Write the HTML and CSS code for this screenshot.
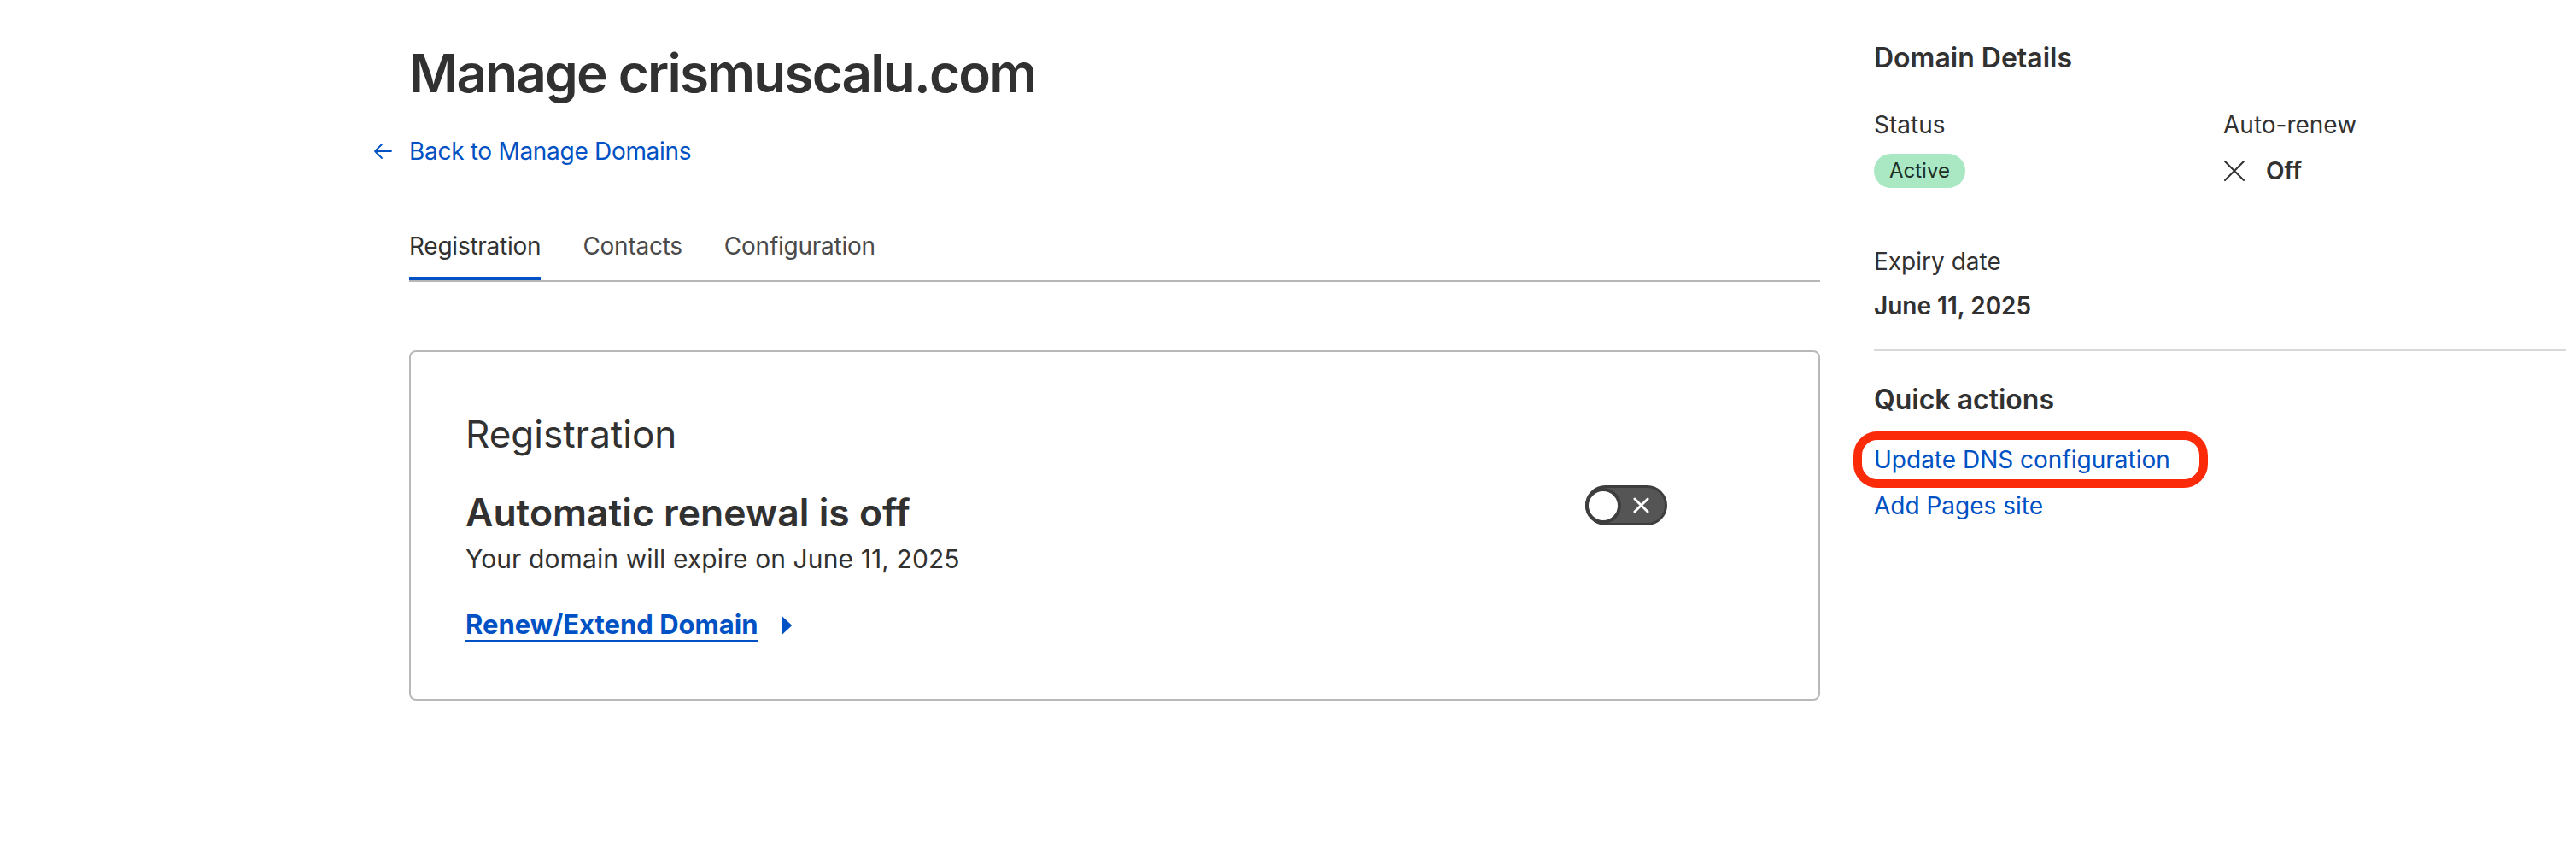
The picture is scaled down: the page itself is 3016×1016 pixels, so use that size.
FILE: index.html
```html
<!DOCTYPE html>
<html lang="en">
<head>
<meta charset="utf-8">
<title>Manage crismuscalu.com</title>
<link rel="stylesheet" href="styles.css">
</head>
<body>
<div class="page">
  <main class="main">
    <h1 class="title">Manage crismuscalu.com</h1>
    <a class="back" href="#">
      <svg class="back-arrow" viewBox="0 0 22 20" width="22" height="20" aria-hidden="true">
        <path d="M21 10H2M10 2L2 10l8 8" fill="none" stroke="#0051c3" stroke-width="1.8" stroke-linecap="round" stroke-linejoin="round"/>
      </svg>
      <span>Back to Manage Domains</span>
    </a>
    <nav class="tabs">
      <a class="tab active" href="#">Registration</a>
      <a class="tab" href="#">Contacts</a>
      <a class="tab" href="#">Configuration</a>
    </nav>
    <section class="card">
      <h2 class="card-title">Registration</h2>
      <div class="renew-row">
        <div class="renew-text">
          <h3 class="renew-head">Automatic renewal is off</h3>
          <p class="renew-sub">Your domain will expire on June 11, 2025</p>
        </div>
        <div class="toggle">
          <span class="knob"></span>
          <svg class="toggle-x" viewBox="0 0 20 20" width="20" height="20" aria-hidden="true">
            <path d="M2 2L18 18M18 2L2 18" stroke="#fff" stroke-width="3" stroke-linecap="round"/>
          </svg>
        </div>
      </div>
      <a class="renew-link" href="#"><span class="renew-label">Renew/Extend Domain</span><svg class="caret" viewBox="0 0 14 26" width="14" height="26" aria-hidden="true"><path d="M2 2.5L12.5 12.2Q13.4 13 12.5 13.8L2 23.5Q1 24.3 1 23V3Q1 1.7 2 2.5Z" fill="#0051c3"/></svg></a>
    </section>
  </main>
  <aside class="side">
    <h2 class="side-title">Domain Details</h2>
    <div class="detail-grid">
      <div class="detail">
        <div class="label">Status</div>
        <div class="value-row"><span class="badge">Active</span></div>
      </div>
      <div class="detail">
        <div class="label">Auto-renew</div>
        <div class="value-row">
          <svg class="off-x" viewBox="0 0 26 24" width="26" height="24" aria-hidden="true">
            <path d="M2 1L24 23M24 1L2 23" stroke="#313131" stroke-width="2" stroke-linecap="round"/>
          </svg>
          <span class="value">Off</span>
        </div>
      </div>
    </div>
    <div class="detail expiry">
      <div class="label">Expiry date</div>
      <div class="value date">June 11, 2025</div>
    </div>
    <hr class="divider">
    <h2 class="side-title qa">Quick actions</h2>
    <ul class="actions">
      <li class="action highlighted"><a href="#">Update DNS configuration</a></li>
      <li class="action"><a href="#">Add Pages site</a></li>
    </ul>
  </aside>
</div>
</body>
</html>
```
FILE: styles.css
```css
*, *::before, *::after { box-sizing: border-box; }
html, body { margin: 0; padding: 0; background: #fff; }
body {
  font-family: "Inter", "Noto Sans", "Liberation Sans", sans-serif;
  color: #313131;
}
a { text-decoration: none; color: #0051c3; }

.page {
  display: flex;
  align-items: flex-start;
  padding-left: 479px;
}

.main {
  width: 1652px;
  padding-top: 48px;
}
.title {
  margin: 0;
  font-size: 62px;
  line-height: 76px;
  font-weight: 600;
  color: #313131;
  letter-spacing: -1.8px;
}
.back {
  display: flex;
  align-items: center;
  margin-top: 33px;
  margin-left: -42px;
  font-size: 28px;
  line-height: 40px;
  letter-spacing: -0.3px;
}
.back-arrow { margin-right: 20px; }

.tabs {
  display: flex;
  gap: 49px;
  margin-top: 71px;
  border-bottom: 2px solid #b6b6b6;
}
.tab {
  font-size: 28px;
  line-height: 40px;
  letter-spacing: -0.25px;
  color: #4a4a4a;
  padding-bottom: 16px;
  border-bottom: 4px solid transparent;
}
.tab.active {
  color: #313131;
  border-bottom-color: #0051c3;
}

.card {
  margin-top: 80px;
  border: 2px solid #b9b9b9;
  border-radius: 8px;
  padding: 70px 64px 66px;
}
.card-title {
  margin: 0;
  font-size: 44px;
  line-height: 52px;
  font-weight: 400;
}
.renew-row {
  display: flex;
  align-items: flex-start;
  margin-top: 40px;
}
.renew-text { flex: 1; }
.renew-head {
  margin: 0;
  font-size: 44.5px;
  line-height: 52px;
  font-weight: 600;
}
.renew-sub {
  margin: 8px 0 0;
  font-size: 30px;
  line-height: 40px;
  letter-spacing: 0.1px;
}
.toggle {
  position: relative;
  width: 96px;
  height: 47px;
  margin-top: -6px;
  margin-right: 113px;
  border-radius: 24px;
  background: #555;
  border: 3px solid #3e3e3e;
  display: flex;
  align-items: center;
}
.knob {
  width: 42px;
  height: 42px;
  border-radius: 50%;
  background: #fff;
  border: 4px solid #3e3e3e;
  margin-left: -3px;
}
.toggle-x { margin-left: 14px; width: 19px; height: 19px; }

.renew-link {
  display: inline-flex;
  align-items: baseline;
  margin-top: 38px;
  font-size: 31px;
  line-height: 40px;
  font-weight: 700;
}
.renew-label {
  border-bottom: 3px solid #0051c3;
  line-height: 37px;
}
.caret { margin-left: 26px; align-self: center; }

.side {
  margin-left: 63px;
  width: 810px;
  padding-top: 48px;
}
.side-title {
  margin: 0;
  font-size: 32px;
  line-height: 40px;
  font-weight: 600;
}
.detail-grid {
  display: grid;
  grid-template-columns: 409px 1fr;
  margin-top: 38px;
}
.label {
  font-size: 28px;
  line-height: 40px;
}
.value-row {
  display: flex;
  align-items: center;
  height: 40px;
  margin-top: 14px;
}
.badge {
  display: inline-block;
  height: 40px;
  line-height: 40px;
  padding: 0 18px;
  border-radius: 20px;
  background: #a9e8c3;
  font-size: 24px;
  color: #1f2e25;
}
.off-x { margin-right: 24px; }
.value {
  font-size: 28px;
  line-height: 40px;
  font-weight: 600;
}
.expiry { margin-top: 66px; }
.date { margin-top: 12px; }
.divider {
  margin: 31px 0 0;
  border: 0;
  border-top: 2px solid #d9d9d9;
  height: 0;
}
.qa { margin-top: 37px; }
.actions {
  list-style: none;
  margin: 30px 0 0;
  padding: 0;
}
.action {
  font-size: 28px;
  line-height: 40px;
}
.action + .action { margin-top: 14px; }
.highlighted { position: relative; }
.highlighted::before {
  content: "";
  position: absolute;
  left: -24px;
  top: -13px;
  width: 415px;
  height: 66px;
  border: 10px solid #fb2a09;
  border-radius: 28px;
  pointer-events: none;
}
```
